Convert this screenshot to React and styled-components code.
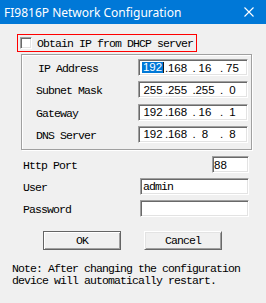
import React from "react";
import styled, { createGlobalStyle } from "styled-components";

const mono = `"Liberation Mono", "DejaVu Sans Mono", monospace`;
const sans = `"Liberation Sans", Arial, sans-serif`;

const GlobalStyle = createGlobalStyle`
  html, body {
    margin: 0;
    padding: 0;
    background: #f0f0f0;
  }
  body {
    width: 266px;
    height: 303px;
    overflow: hidden;
  }
`;

const Window = styled.div`
  width: 266px;
  height: 303px;
  background: #f0f0f0;
  font-family: ${mono};
  font-size: 11.5px;
  letter-spacing: -0.9px;
  color: #000;
  display: flex;
  flex-direction: column;
`;

const TitleBar = styled.div`
  height: 24px;
  flex-shrink: 0;
  background: #0078d7;
  color: #fff;
  display: flex;
  align-items: center;
  justify-content: space-between;
  padding: 0 12px 0 4px;
  font-family: "Noto Sans", sans-serif;
  font-size: 12px;
  letter-spacing: 0;
`;

const DhcpBox = styled.label`
  box-sizing: border-box;
  margin: 10px 0 0 17px;
  width: 180px;
  height: 18px;
  border: 1px solid #f00;
  display: flex;
  align-items: center;
  gap: 5px;
  padding-left: 2px;
`;

const Check = styled.span`
  box-sizing: border-box;
  width: 12px;
  height: 12px;
  background: #fff;
  border: 1px solid;
  border-color: #a0a0a0 #fff #fff #a0a0a0;
  box-shadow: inset 1px 1px 0 #696969, inset -1px -1px 0 #e3e3e3;
`;

const GroupBox = styled.div`
  box-sizing: border-box;
  margin: 2px 0 0 21px;
  width: 231px;
  height: 96px;
  border: 1px solid #a0a0a0;
  box-shadow: inset 1px 1px 0 #fff, 1px 1px 0 #fff;
  padding: 4px 3px 0 14px;
  display: grid;
  grid-template-columns: 1fr 110px;
  grid-auto-rows: 17px;
  row-gap: 5.33px;
  align-items: center;
`;

const Label = styled.span`
  padding-left: ${(p) => p.$indent || 0}px;
  padding-top: 2px;
  white-space: pre;
`;

const Field = styled.div`
  box-sizing: border-box;
  width: ${(p) => p.$w}px;
  height: 17px;
  justify-self: end;
  background: #fff;
  border: 1px solid;
  border-color: #a0a0a0 #fff #fff #a0a0a0;
  box-shadow: inset 1px 1px 0 #696969, inset -1px -1px 0 #e3e3e3;
  display: flex;
  align-items: center;
  padding-left: ${(p) => (p.$pad != null ? p.$pad : 2)}px;
  font-family: ${(p) => (p.$mono ? mono : sans)};
  font-size: 11.5px;
  letter-spacing: ${(p) => (p.$mono ? "-0.9px" : "0")};
  white-space: pre;
`;

const Seg = styled.span`
  display: inline-flex;
  width: ${(p) => (p.$first ? 24 : 27.5)}px;
  flex-shrink: 0;
`;

const Dot = styled.span`
  width: 5px;
  flex-shrink: 0;
`;

const Num = styled.span`
  display: flex;
  justify-content: center;
  width: ${(p) => (p.$first ? 24 : 15)}px;
  flex-shrink: 0;
`;

const Selected = styled.span`
  background: #0078d7;
  color: #fff;
  line-height: 11px;
  padding: 0 0.5px;
  border-right: 1px solid #1a1a1a;
`;

const Lower = styled.div`
  margin-top: 6px;
  padding: 0 17px 0 23px;
  display: grid;
  grid-template-columns: 1fr auto;
  grid-auto-rows: 17px;
  row-gap: 5px;
  align-items: center;
`;

const ButtonRow = styled.div`
  margin-top: 14px;
  padding-left: 43px;
  display: flex;
  gap: 23px;
`;

const Button = styled.button`
  box-sizing: border-box;
  width: 78px;
  height: 19px;
  margin: 0;
  padding: 0;
  background: #f0f0f0;
  font-family: ${mono};
  font-size: 11.5px;
  letter-spacing: -0.9px;
  color: #000;
  border: 1px solid;
  border-color: ${(p) => (p.$default ? "#646464" : "#fff #696969 #696969 #fff")};
  box-shadow: ${(p) =>
    p.$default
      ? "inset 1px 1px 0 #fff, inset -1px -1px 0 #a0a0a0"
      : "inset 1px 1px 0 #e3e3e3, inset -1px -1px 0 #a0a0a0"};
`;

const Note = styled.p`
  margin: 13px 0 0;
  padding-left: 12px;
  line-height: 12px;
  white-space: pre;
`;

const CloseIcon = () => (
  <svg width="10" height="10" viewBox="0 0 10 10">
    <path d="M0.5 0.5 L9.5 9.5 M9.5 0.5 L0.5 9.5" stroke="#fff" strokeWidth="1.1" />
  </svg>
);

const IpField = ({ parts, selectFirst }) => (
  <Field $w={110}>
    {parts.map((n, i) =>
      i === 0 ? (
        <Seg key={i} $first>
          <Num $first>{selectFirst ? <Selected>{n}</Selected> : n}</Num>
        </Seg>
      ) : (
        <Seg key={i}>
          <Dot>.</Dot>
          <Num>{n}</Num>
        </Seg>
      )
    )}
  </Field>
);

const addresses = [
  { label: "IP Address", indent: 2, parts: ["192", "168", "16", "75"], selectFirst: true },
  { label: "Subnet Mask", parts: ["255", "255", "255", "0"] },
  { label: "Gateway", parts: ["192", "168", "16", "1"] },
  { label: "DNS Server", parts: ["192", "168", "8", "8"] },
];

export default function App() {
  return (
    <Window>
      <GlobalStyle />
      <TitleBar>
        <span>FI9816P Network Configuration</span>
        <CloseIcon />
      </TitleBar>
      <DhcpBox>
        <Check />
        <span>Obtain IP from DHCP server</span>
      </DhcpBox>
      <GroupBox>
        {addresses.map((a) => (
          <React.Fragment key={a.label}>
            <Label $indent={a.indent}>{a.label}</Label>
            <IpField parts={a.parts} selectFirst={a.selectFirst} />
          </React.Fragment>
        ))}
      </GroupBox>
      <Lower>
        <Label>Http Port</Label>
        <Field $w={37} $pad={1}>88</Field>
        <Label>User</Label>
        <Field $w={109} $mono>admin</Field>
        <Label>Password</Label>
        <Field $w={109} $mono />
      </Lower>
      <ButtonRow>
        <Button $default>OK</Button>
        <Button>Cancel</Button>
      </ButtonRow>
      <Note>{"Note: After changing the configuration\ndevice will automatically restart."}</Note>
    </Window>
  );
}
